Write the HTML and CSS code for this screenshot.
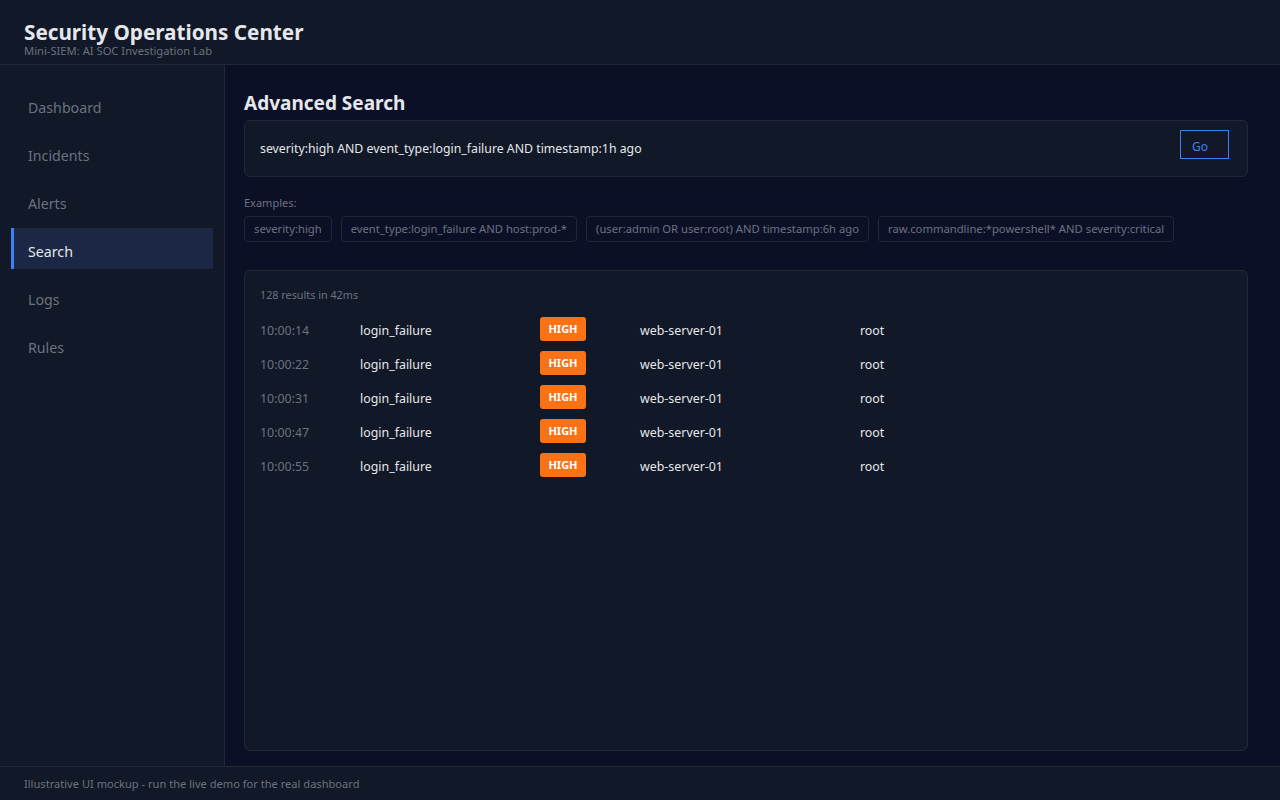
FILE: index.html
```html
<!DOCTYPE html>
<html lang="en">
<head>
<meta charset="UTF-8">
<meta name="viewport" content="width=device-width, initial-scale=1.0">
<title>Security Operations Center</title>
<link rel="stylesheet" href="styles.css">
</head>
<body>
    <div class="app">
        <header class="topbar">
            <h1>Security Operations Center</h1>
            <div class="subtitle">Mini-SIEM: AI SOC Investigation Lab</div>
        </header>

        <div class="body">
            <nav class="sidebar">
                <a class="nav-item">Dashboard</a>
                <a class="nav-item">Incidents</a>
                <a class="nav-item">Alerts</a>
                <a class="nav-item active">Search</a>
                <a class="nav-item">Logs</a>
                <a class="nav-item">Rules</a>
            </nav>

            <main class="main">
                <h2>Advanced Search</h2>
                <div class="search-box">
                    <span class="query">severity:high AND event_type:login_failure AND timestamp:1h ago</span>
                    <button class="go-btn">Go</button>
                </div>

                <div class="examples-label">Examples:</div>
                <div class="examples">
                    <span class="chip">severity:high</span>
                    <span class="chip">event_type:login_failure AND host:prod-*</span>
                    <span class="chip">(user:admin OR user:root) AND timestamp:6h ago</span>
                    <span class="chip">raw.commandline:*powershell* AND severity:critical</span>
                </div>

                <div class="results">
                    <div class="results-meta">128 results in 42ms</div>
                    <div class="row">
                        <span class="col-time">10:00:14</span>
                        <span class="col-event">login_failure</span>
                        <span class="col-sev"><span class="badge">HIGH</span></span>
                        <span class="col-host">web-server-01</span>
                        <span class="col-user">root</span>
                    </div>
                    <div class="row">
                        <span class="col-time">10:00:22</span>
                        <span class="col-event">login_failure</span>
                        <span class="col-sev"><span class="badge">HIGH</span></span>
                        <span class="col-host">web-server-01</span>
                        <span class="col-user">root</span>
                    </div>
                    <div class="row">
                        <span class="col-time">10:00:31</span>
                        <span class="col-event">login_failure</span>
                        <span class="col-sev"><span class="badge">HIGH</span></span>
                        <span class="col-host">web-server-01</span>
                        <span class="col-user">root</span>
                    </div>
                    <div class="row">
                        <span class="col-time">10:00:47</span>
                        <span class="col-event">login_failure</span>
                        <span class="col-sev"><span class="badge">HIGH</span></span>
                        <span class="col-host">web-server-01</span>
                        <span class="col-user">root</span>
                    </div>
                    <div class="row">
                        <span class="col-time">10:00:55</span>
                        <span class="col-event">login_failure</span>
                        <span class="col-sev"><span class="badge">HIGH</span></span>
                        <span class="col-host">web-server-01</span>
                        <span class="col-user">root</span>
                    </div>
                </div>
            </main>
        </div>

        <footer class="footer">Illustrative UI mockup - run the live demo for the real dashboard</footer>
    </div>
</body>
</html>
```

FILE: styles.css
```css
/* Base */
* {
    box-sizing: border-box;
}
body {
    margin: 0;
    padding: 0;
    font-family: "Noto Sans", "Open Sans", sans-serif;
    background-color: #0b1027;
    color: #e5e7eb;
}
.app {
    display: flex;
    flex-direction: column;
    height: 800px;
}

/* Header */
.topbar {
    height: 65px;
    padding: 19px 24px 0;
    background-color: #111827;
    border-bottom: 1px solid #1f2937;
}
.topbar h1 {
    margin: 0;
    font-size: 20.7px;
    line-height: 26px;
    font-weight: 700;
    color: #e5e7eb;
}
.subtitle {
    font-size: 11.2px;
    line-height: 11px;
    color: #6b7280;
}

/* Sidebar + content */
.body {
    flex: 1;
    display: flex;
    min-height: 0;
}
.sidebar {
    width: 225px;
    padding: 19px 11px;
    background-color: #111827;
    border-right: 1px solid #1f2937;
    display: flex;
    flex-direction: column;
    gap: 7px;
}
.nav-item {
    display: block;
    height: 41px;
    padding: 6px 0 0 14px;
    line-height: 35px;
    font-size: 14.2px;
    color: #6b7280;
    border-left: 3px solid transparent;
}
.nav-item.active {
    background-color: #1b2745;
    border-left-color: #3b82f6;
    color: #e5e7eb;
}

.main {
    flex: 1;
    display: flex;
    flex-direction: column;
    padding: 24px 32px 15px 19px;
    background-color: #0b1027;
}
.main h2 {
    margin: 0 0 3px;
    font-size: 19px;
    line-height: 28px;
    font-weight: 700;
    color: #e5e7eb;
}

/* Query box */
.search-box {
    height: 57px;
    display: flex;
    align-items: center;
    justify-content: space-between;
    padding: 0 18px 0 15px;
    background-color: #111827;
    border: 1px solid #1f2937;
    border-radius: 6px;
}
.query {
    font-size: 12.3px;
    color: #e5e7eb;
}
.go-btn {
    width: 49px;
    height: 29px;
    margin-top: -9px;
    padding: 4px 0 0 11px;
    background: transparent;
    border: 1px solid #3b82f6;
    color: #3b82f6;
    font-family: inherit;
    font-size: 12px;
    text-align: left;
}

/* Example queries */
.examples-label {
    margin-top: 18px;
    font-size: 11px;
    line-height: 16px;
    color: #6b7280;
}
.examples {
    display: flex;
    gap: 9px;
    margin-top: 5px;
}
.chip {
    height: 26px;
    line-height: 24px;
    padding: 0 9px;
    font-size: 11.25px;
    color: #6b7280;
    border: 1px solid #1f2937;
    border-radius: 4px;
}

/* Result list */
.results {
    flex: 1;
    margin-top: 28px;
    padding: 16px 15px;
    background-color: #111827;
    border: 1px solid #1f2937;
    border-radius: 6px;
}
.results-meta {
    font-size: 10.8px;
    line-height: 16px;
    color: #6b7280;
    margin-bottom: 10px;
}
.row {
    display: flex;
    align-items: center;
    height: 34px;
    font-size: 12.4px;
    color: #e5e7eb;
}
.col-time {
    width: 100px;
    color: #6b7280;
}
.col-event {
    width: 180px;
}
.col-sev {
    width: 100px;
}
.col-host {
    width: 220px;
}
.badge {
    display: inline-block;
    width: 46px;
    height: 24px;
    margin-top: -5px;
    line-height: 24px;
    text-align: center;
    background-color: #f97316;
    color: #fff;
    font-size: 11px;
    font-weight: 700;
    border-radius: 3px;
}

/* Footer */
.footer {
    height: 34px;
    line-height: 34px;
    padding-left: 24px;
    background-color: #111827;
    border-top: 1px solid #1f2937;
    font-size: 11.1px;
    color: #6b7280;
}
```
